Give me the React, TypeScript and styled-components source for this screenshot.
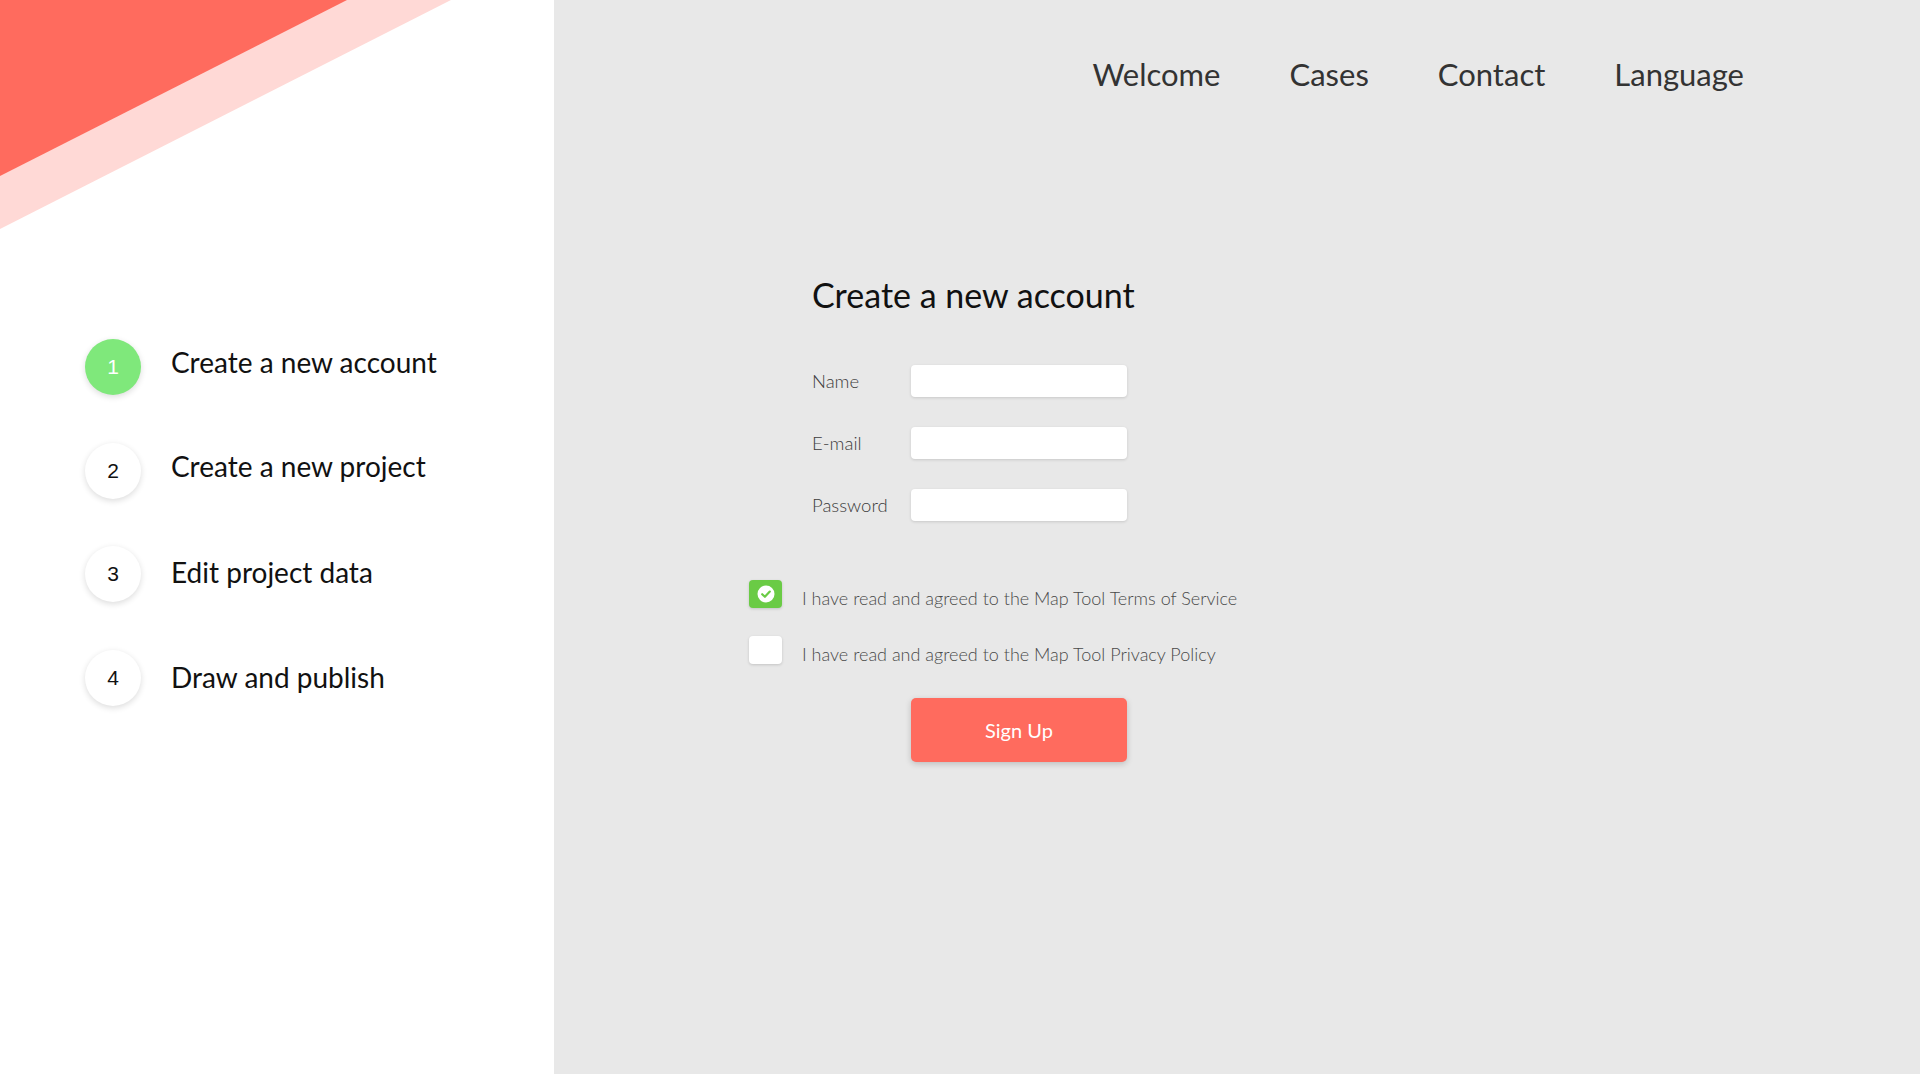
import React, { useState } from "react";
import styled, { createGlobalStyle } from "styled-components";

const GlobalStyle = createGlobalStyle`
  html, body {
    margin: 0;
    padding: 0;
    height: 100%;
  }
  body {
    font-family: Lato, "Open Sans", sans-serif;
    color: #111;
  }
  #root {
    height: 100%;
  }
`;

const Page = styled.div`
  display: flex;
  height: 100vh;
  min-height: 1074px;
  overflow: hidden;
`;

const Sidebar = styled.aside`
  width: 554px;
  flex-shrink: 0;
  background: #fff;
  display: flex;
  flex-direction: column;
`;

const Corner = styled.svg`
  display: block;
  width: 554px;
  height: 230px;
`;

const Steps = styled.ol`
  list-style: none;
  margin: 0;
  padding: 109px 0 0 85px;
  display: flex;
  flex-direction: column;
  gap: 47.5px;
`;

const Step = styled.li`
  display: flex;
  align-items: center;
  gap: 30px;
`;

const StepNumber = styled.span<{ $active?: boolean }>`
  width: 56px;
  height: 56px;
  border-radius: 50%;
  display: flex;
  align-items: center;
  justify-content: center;
  font-family: "Liberation Sans", Arial, sans-serif;
  font-size: 21px;
  background: ${(p) => (p.$active ? "#7fe87b" : "#fff")};
  color: ${(p) => (p.$active ? "#fff" : "#111")};
  box-shadow: 0 2px 6px rgba(0, 0, 0, 0.14);
`;

const StepLabel = styled.span<{ $lift: number }>`
  font-size: 28px;
  line-height: 34px;
  padding-bottom: ${(p) => p.$lift}px;
  color: #111;
`;

const Main = styled.main`
  flex: 1;
  background: #e8e8e8;
  display: flex;
  flex-direction: column;
`;

const Nav = styled.nav`
  display: flex;
  justify-content: flex-end;
  gap: 69px;
  padding: 56px 176px 0 0;
`;

const NavItem = styled.a`
  font-size: 31px;
  line-height: 36px;
  color: #333;
  text-decoration: none;
  cursor: pointer;
`;

const Form = styled.form`
  margin: 183px 0 0 195px;
  display: flex;
  flex-direction: column;
`;

const Heading = styled.h1`
  margin: 0 0 50px 63px;
  font-size: 34px;
  line-height: 40px;
  font-weight: 400;
  color: #111;
`;

const Fields = styled.div`
  display: flex;
  flex-direction: column;
  gap: 30px;
  margin-left: 63px;
`;

const FieldRow = styled.label`
  display: flex;
  align-items: center;
  height: 32px;
`;

const FieldName = styled.span`
  width: 99px;
  font-size: 18.5px;
  font-weight: 300;
  color: #3c3c3c;
`;

const Input = styled.input`
  width: 216px;
  height: 32px;
  box-sizing: border-box;
  border: none;
  border-radius: 4px;
  background: #fff;
  box-shadow: 0 1px 3px rgba(0, 0, 0, 0.14);
  padding: 0 10px;
  font-family: inherit;
  font-size: 16px;
  outline: none;
`;

const Agreements = styled.div`
  display: flex;
  flex-direction: column;
  gap: 28px;
  margin-top: 59px;
`;

const AgreeRow = styled.label`
  display: flex;
  align-items: center;
  gap: 20px;
  height: 28px;
  cursor: pointer;
`;

const Box = styled.span<{ $checked: boolean }>`
  width: 33px;
  height: 28px;
  border-radius: 4px;
  display: flex;
  align-items: center;
  justify-content: center;
  background: ${(p) => (p.$checked ? "#6acb45" : "#fff")};
  box-shadow: 0 1px 3px rgba(0, 0, 0, 0.16);
`;

const AgreeText = styled.span`
  font-size: 18px;
  font-weight: 300;
  color: #4a4a4a;
  padding-top: 7px;
`;

const SubmitButton = styled.button`
  margin: 34px 0 0 162px;
  width: 216px;
  height: 64px;
  border: none;
  border-radius: 5px;
  background: #ff6b5e;
  color: #fff;
  font-family: inherit;
  font-size: 20px;
  box-shadow: 0 2px 6px rgba(0, 0, 0, 0.18);
  cursor: pointer;
`;

function CheckMark() {
  return (
    <svg width="18" height="18" viewBox="0 0 18 18">
      <circle cx="9" cy="9" r="8.5" fill="#fff" />
      <path
        d="M5.2 9.2 L7.9 11.8 L12.8 6.6"
        fill="none"
        stroke="#6acb45"
        strokeWidth="2.2"
        strokeLinecap="round"
        strokeLinejoin="round"
      />
    </svg>
  );
}

// text sits slightly above the circle centre on the first rows
const steps = [
  { label: "Create a new account", lift: 10 },
  { label: "Create a new project", lift: 9 },
  { label: "Edit project data", lift: 4 },
  { label: "Draw and publish", lift: 1 },
];

const navLinks = ["Welcome", "Cases", "Contact", "Language"];

export default function App() {
  const [terms, setTerms] = useState(true);
  const [privacy, setPrivacy] = useState(false);

  return (
    <Page>
      <GlobalStyle />
      <Sidebar>
        <Corner viewBox="0 0 554 230">
          <polygon points="0,0 451,0 0,229" fill="#ffd9d6" />
          <polygon points="0,0 347,0 0,176" fill="#ff6b5e" />
        </Corner>
        <Steps>
          {steps.map((s, i) => (
            <Step key={s.label}>
              <StepNumber $active={i === 0}>{i + 1}</StepNumber>
              <StepLabel $lift={s.lift}>{s.label}</StepLabel>
            </Step>
          ))}
        </Steps>
      </Sidebar>
      <Main>
        <Nav>
          {navLinks.map((n) => (
            <NavItem key={n}>{n}</NavItem>
          ))}
        </Nav>
        <Form onSubmit={(e) => e.preventDefault()}>
          <Heading>Create a new account</Heading>
          <Fields>
            <FieldRow>
              <FieldName>Name</FieldName>
              <Input type="text" />
            </FieldRow>
            <FieldRow>
              <FieldName>E-mail</FieldName>
              <Input type="email" />
            </FieldRow>
            <FieldRow>
              <FieldName>Password</FieldName>
              <Input type="password" />
            </FieldRow>
          </Fields>
          <Agreements>
            <AgreeRow onClick={() => setTerms(!terms)}>
              <Box $checked={terms}>{terms && <CheckMark />}</Box>
              <AgreeText>I have read and agreed to the Map Tool Terms of Service</AgreeText>
            </AgreeRow>
            <AgreeRow onClick={() => setPrivacy(!privacy)}>
              <Box $checked={privacy}>{privacy && <CheckMark />}</Box>
              <AgreeText>I have read and agreed to the Map Tool Privacy Policy</AgreeText>
            </AgreeRow>
          </Agreements>
          <SubmitButton type="submit">Sign Up</SubmitButton>
        </Form>
      </Main>
    </Page>
  );
}
